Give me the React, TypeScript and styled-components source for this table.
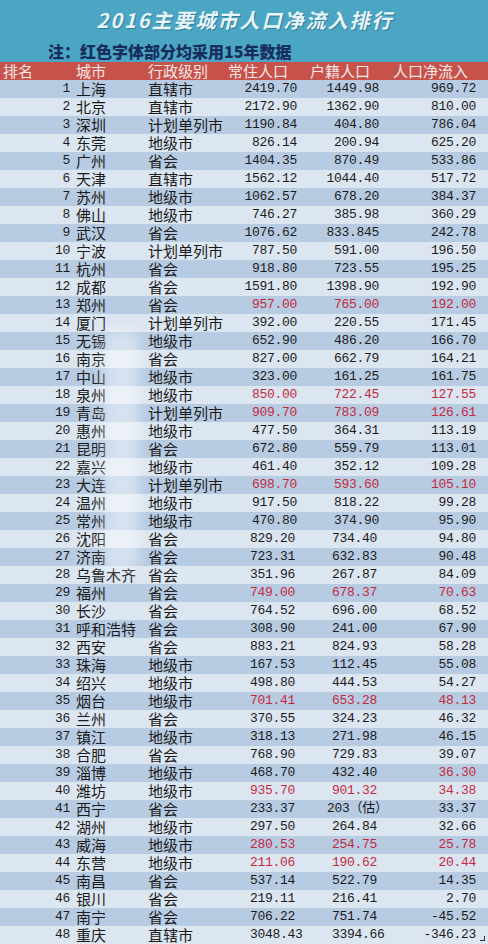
import React from 'react'
import styled, { createGlobalStyle } from 'styled-components'

interface IRow {
  rank: number
  city: string
  level: string
  resident: string
  registered: string
  net: string
  red?: boolean
  netRed?: boolean
}

const rows: IRow[] = [
  { rank: 1, city: '上海', level: '直辖市', resident: '2419.70', registered: '1449.98', net: '969.72' },
  { rank: 2, city: '北京', level: '直辖市', resident: '2172.90', registered: '1362.90', net: '810.00' },
  { rank: 3, city: '深圳', level: '计划单列市', resident: '1190.84', registered: '404.80', net: '786.04' },
  { rank: 4, city: '东莞', level: '地级市', resident: '826.14', registered: '200.94', net: '625.20' },
  { rank: 5, city: '广州', level: '省会', resident: '1404.35', registered: '870.49', net: '533.86' },
  { rank: 6, city: '天津', level: '直辖市', resident: '1562.12', registered: '1044.40', net: '517.72' },
  { rank: 7, city: '苏州', level: '地级市', resident: '1062.57', registered: '678.20', net: '384.37' },
  { rank: 8, city: '佛山', level: '地级市', resident: '746.27', registered: '385.98', net: '360.29' },
  { rank: 9, city: '武汉', level: '省会', resident: '1076.62', registered: '833.845', net: '242.78' },
  { rank: 10, city: '宁波', level: '计划单列市', resident: '787.50', registered: '591.00', net: '196.50' },
  { rank: 11, city: '杭州', level: '省会', resident: '918.80', registered: '723.55', net: '195.25' },
  { rank: 12, city: '成都', level: '省会', resident: '1591.80', registered: '1398.90', net: '192.90' },
  { rank: 13, city: '郑州', level: '省会', resident: '957.00', registered: '765.00', net: '192.00', red: true },
  { rank: 14, city: '厦门', level: '计划单列市', resident: '392.00', registered: '220.55', net: '171.45' },
  { rank: 15, city: '无锡', level: '地级市', resident: '652.90', registered: '486.20', net: '166.70' },
  { rank: 16, city: '南京', level: '省会', resident: '827.00', registered: '662.79', net: '164.21' },
  { rank: 17, city: '中山', level: '地级市', resident: '323.00', registered: '161.25', net: '161.75' },
  { rank: 18, city: '泉州', level: '地级市', resident: '850.00', registered: '722.45', net: '127.55', red: true },
  { rank: 19, city: '青岛', level: '计划单列市', resident: '909.70', registered: '783.09', net: '126.61', red: true },
  { rank: 20, city: '惠州', level: '地级市', resident: '477.50', registered: '364.31', net: '113.19' },
  { rank: 21, city: '昆明', level: '省会', resident: '672.80', registered: '559.79', net: '113.01' },
  { rank: 22, city: '嘉兴', level: '地级市', resident: '461.40', registered: '352.12', net: '109.28' },
  { rank: 23, city: '大连', level: '计划单列市', resident: '698.70', registered: '593.60', net: '105.10', red: true },
  { rank: 24, city: '温州', level: '地级市', resident: '917.50', registered: '818.22', net: '99.28' },
  { rank: 25, city: '常州', level: '地级市', resident: '470.80', registered: '374.90', net: '95.90' },
  { rank: 26, city: '沈阳', level: '省会', resident: '829.20', registered: '734.40', net: '94.80' },
  { rank: 27, city: '济南', level: '省会', resident: '723.31', registered: '632.83', net: '90.48' },
  { rank: 28, city: '乌鲁木齐', level: '省会', resident: '351.96', registered: '267.87', net: '84.09' },
  { rank: 29, city: '福州', level: '省会', resident: '749.00', registered: '678.37', net: '70.63', red: true },
  { rank: 30, city: '长沙', level: '省会', resident: '764.52', registered: '696.00', net: '68.52' },
  { rank: 31, city: '呼和浩特', level: '省会', resident: '308.90', registered: '241.00', net: '67.90' },
  { rank: 32, city: '西安', level: '省会', resident: '883.21', registered: '824.93', net: '58.28' },
  { rank: 33, city: '珠海', level: '地级市', resident: '167.53', registered: '112.45', net: '55.08' },
  { rank: 34, city: '绍兴', level: '地级市', resident: '498.80', registered: '444.53', net: '54.27' },
  { rank: 35, city: '烟台', level: '地级市', resident: '701.41', registered: '653.28', net: '48.13', red: true },
  { rank: 36, city: '兰州', level: '省会', resident: '370.55', registered: '324.23', net: '46.32' },
  { rank: 37, city: '镇江', level: '地级市', resident: '318.13', registered: '271.98', net: '46.15' },
  { rank: 38, city: '合肥', level: '省会', resident: '768.90', registered: '729.83', net: '39.07' },
  { rank: 39, city: '淄博', level: '地级市', resident: '468.70', registered: '432.40', net: '36.30', netRed: true },
  { rank: 40, city: '潍坊', level: '地级市', resident: '935.70', registered: '901.32', net: '34.38', red: true },
  { rank: 41, city: '西宁', level: '省会', resident: '233.37', registered: '203（估）', net: '33.37' },
  { rank: 42, city: '湖州', level: '地级市', resident: '297.50', registered: '264.84', net: '32.66' },
  { rank: 43, city: '威海', level: '地级市', resident: '280.53', registered: '254.75', net: '25.78', red: true },
  { rank: 44, city: '东营', level: '地级市', resident: '211.06', registered: '190.62', net: '20.44', red: true },
  { rank: 45, city: '南昌', level: '省会', resident: '537.14', registered: '522.79', net: '14.35' },
  { rank: 46, city: '银川', level: '省会', resident: '219.11', registered: '216.41', net: '2.70' },
  { rank: 47, city: '南宁', level: '省会', resident: '706.22', registered: '751.74', net: '-45.52' },
  { rank: 48, city: '重庆', level: '直辖市', resident: '3048.43', registered: '3394.66', net: '-346.23' }
]

const GlobalStyle = createGlobalStyle`
  html, body {
    margin: 0;
    padding: 0;
    background: #dce6f1;
  }
`

const Sheet = styled.div`
  position: relative;
  width: 488px;
  overflow: hidden;
  font-family: 'Noto Sans CJK SC', 'Liberation Sans', sans-serif;
  color: #1b1b1b;
`

const TitleBar = styled.div`
  height: 40px;
  background: #4ba6c3;
  display: flex;
  align-items: center;
  justify-content: center;
`

const Title = styled.h1`
  margin: 0;
  padding-left: 2px;
  font-size: 20px;
  font-weight: 700;
  font-style: italic;
  letter-spacing: 2px;
  color: #e8f5f9;
  text-shadow: 1px 1px 0 #2f7d99;
  line-height: 1;
`

const NoteBar = styled.div`
  height: 22px;
  background: #4ba6c3;
  display: flex;
  align-items: center;
  padding-left: 48px;
`

const Note = styled.span`
  font-size: 16px;
  font-weight: 900;
  color: #172d5e;
  line-height: 1;
`

const Grid = styled.div<{ $tone: 'head' | 'dark' | 'light' }>`
  display: grid;
  grid-template-columns: 74px 72px 80px 79px 83px 100px;
  height: 18px;
  background: ${p =>
    p.$tone === 'head' ? '#c7514b' : p.$tone === 'dark' ? '#b7cbe3' : '#dce6f1'};
`

const HeadCell = styled.div<{ $pad: number }>`
  padding-left: ${p => p.$pad}px;
  font-size: 15px;
  line-height: 18px;
  color: #f6e9e6;
  white-space: nowrap;
`

const TextCell = styled.div`
  padding-left: 2px;
  font-size: 15px;
  line-height: 18px;
  white-space: nowrap;
`

const NumCell = styled.div<{ $left?: number; $right?: number; $red?: boolean }>`
  display: flex;
  align-items: center;
  justify-content: ${p => (p.$left !== undefined ? 'flex-start' : 'flex-end')};
  padding-left: ${p => p.$left ?? 0}px;
  padding-right: ${p => p.$right ?? 0}px;
  font-family: 'Liberation Mono', 'Noto Sans CJK SC', monospace;
  font-size: 13px;
  letter-spacing: -0.3px;
  line-height: 18px;
  white-space: nowrap;
  color: ${p => (p.$red ? '#c42a3e' : '#1b1b1b')};
`

const Smudge = styled.div`
  position: absolute;
  left: 104px;
  top: 330px;
  width: 34px;
  height: 240px;
  background: rgba(255, 255, 255, 0.45);
  filter: blur(7px);
  pointer-events: none;
`

const Grip = styled.div`
  position: absolute;
  right: 3px;
  bottom: 3px;
  width: 4px;
  height: 4px;
  border-right: 1px solid #333;
  border-bottom: 1px solid #333;
`

const App: React.FC = () => {
  return (
    <Sheet>
      <GlobalStyle />
      <TitleBar>
        <Title>2016主要城市人口净流入排行</Title>
      </TitleBar>
      <NoteBar>
        <Note>注：红色字体部分均采用15年数据</Note>
      </NoteBar>
      <Grid $tone='head'>
        <HeadCell $pad={3}>排名</HeadCell>
        <HeadCell $pad={2}>城市</HeadCell>
        <HeadCell $pad={2}>行政级别</HeadCell>
        <HeadCell $pad={2}>常住人口</HeadCell>
        <HeadCell $pad={5}>户籍人口</HeadCell>
        <HeadCell $pad={5}>人口净流入</HeadCell>
      </Grid>
      {rows.map(row => {
        // lower part of the sheet has the two population columns left-aligned
        const lower = row.rank > 25
        return (
          <Grid key={row.rank} $tone={row.rank % 2 === 1 ? 'dark' : 'light'}>
            <NumCell $right={4}>{row.rank}</NumCell>
            <TextCell>{row.city}</TextCell>
            <TextCell>{row.level}</TextCell>
            {lower ? (
              <NumCell $left={24} $red={row.red}>{row.resident}</NumCell>
            ) : (
              <NumCell $right={8} $red={row.red}>{row.resident}</NumCell>
            )}
            {lower ? (
              <NumCell $left={row.rank === 41 ? 22 : 27} $red={row.red}>
                {row.registered}
              </NumCell>
            ) : (
              <NumCell $right={9} $red={row.red}>{row.registered}</NumCell>
            )}
            <NumCell $right={12} $red={row.red || row.netRed}>{row.net}</NumCell>
          </Grid>
        )
      })}
      <Smudge />
      <Grip />
    </Sheet>
  )
}

export default App
